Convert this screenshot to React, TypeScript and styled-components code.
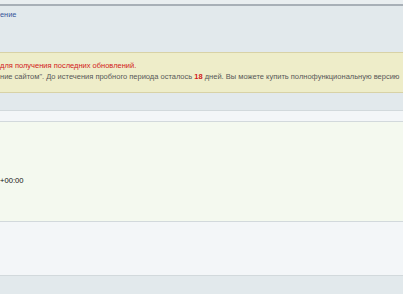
import React from "react";
import styled, { createGlobalStyle } from "styled-components";

const Global = createGlobalStyle`
  html, body { margin: 0; padding: 0; }
  body {
    background: #e2e9ec;
    font-family: "Liberation Sans", Arial, sans-serif;
    overflow: hidden;
  }
`;

const Page = styled.div`
  width: 403px;
  height: 294px;
  overflow: hidden;
  display: flex;
  flex-direction: column;
`;

const TopBar = styled.div`
  height: 4px;
  background: #e9eef0;
  border-bottom: 2px solid #a8b0b7;
`;

const Crumbs = styled.div`
  padding: 4px 0 0 0;
  height: 28px;
  font-size: 7.4px;
  line-height: 10px;
`;

const CrumbLink = styled.a`
  color: #34559a;
  text-decoration: none;
`;

const Notice = styled.div`
  margin-top: 14px;
  background: #eeedc9;
  border-top: 1px solid #d8d2a6;
  border-bottom: 1px solid #d8d2a6;
  padding: 7px 0 10px 0;
  font-size: 7.5px;
  line-height: 11px;
  white-space: nowrap;
`;

const NoticeTitle = styled.div`
  color: #d21a1a;
`;

const NoticeText = styled.div`
  color: #585858;
`;

const Days = styled.b`
  color: #d21a1a;
`;

const Section = styled.div<{ $h: number; $bg: string; $top?: number }>`
  height: ${(p) => p.$h}px;
  background: ${(p) => p.$bg};
  border-bottom: 1px solid #d2d9dc;
  ${(p) => (p.$top !== undefined ? `margin-top: ${p.$top}px; border-top: 1px solid #d2d9dc;` : "")}
`;

const Body = styled.div`
  height: 100px;
  background: #f4f9ef;
  border-bottom: 1px solid #d2d9dc;
  padding-top: 54px;
  box-sizing: border-box;
  font-size: 7.6px;
  line-height: 10px;
  color: #111;
`;

export default function App() {
  return (
    <>
      <Global />
      <Page>
        <TopBar />
        <Crumbs>
          <CrumbLink href="#">ение</CrumbLink>
        </Crumbs>
        <Notice>
          <NoticeTitle>для получения последних обновлений.</NoticeTitle>
          <NoticeText>
            ние сайтом". До истечения пробного периода осталось <Days>18</Days> дней. Вы можете купить полнофункциональную версию
          </NoticeText>
        </Notice>
        <Section $h={10} $bg="#f3f6f8" $top={17} />
        <Body>+00:00</Body>
        <Section $h={53} $bg="#f3f6f8" />
      </Page>
    </>
  );
}
